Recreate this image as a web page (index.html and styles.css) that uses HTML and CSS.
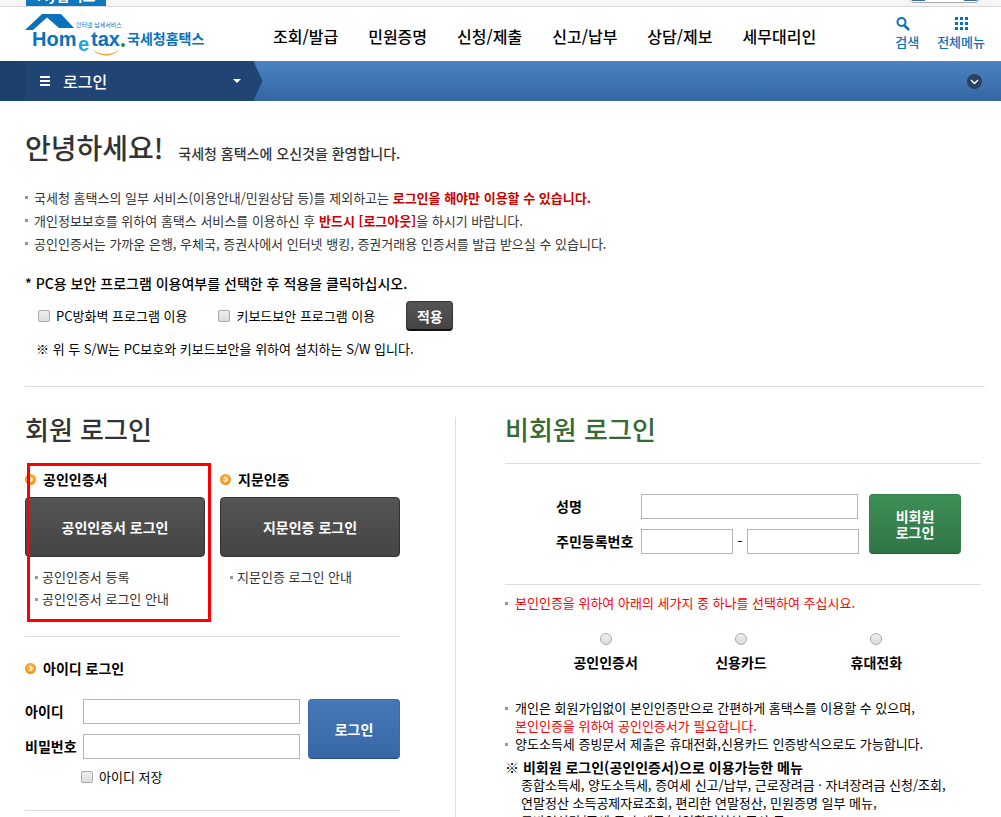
FILE: index.html
```html
<!DOCTYPE html>
<html lang="ko">
<head>
  <meta charset="UTF-8">
  <meta name="viewport" content="width=device-width, initial-scale=1.0">
  <title>국세청 홈택스 - 로그인</title>
  <link rel="stylesheet" href="styles.css">
</head>
<body>

  <!-- top strip -->
  <div class="top-bar">
    <span class="top-tab">My홈택스</span>
    <span class="top-zoom"><i></i><i></i></span>
  </div>

  <header class="header">
    <a class="logo" href="#" aria-label="Hometax 국세청홈택스">
      <svg width="182" height="44" viewBox="0 0 182 44">
        <path d="M0 17 L17 1 H36 L49 15 H34 L22 4.500 L8 17 Z" fill="#0a71bb"/>
        <text class="logo-small" x="51" y="14">인터넷 납세서비스</text>
        <text class="logo-word" x="7" y="33">Hom</text>
        <text class="logo-word logo-e" x="53" y="38">e</text>
        <text class="logo-word" x="66" y="33">tax</text>
        <circle cx="98" cy="32" r="2" fill="#0b9b4b"/>
        <path d="M66 36 Q81 46 96 36 Q81 49 66 36 Z" fill="#f9a11b"/>
        <text class="logo-name" x="102" y="31">국세청홈택스</text>
      </svg>
    </a>
    <nav class="menu">
      <a href="#">조회/발급</a>
      <a href="#">민원증명</a>
      <a href="#">신청/제출</a>
      <a href="#">신고/납부</a>
      <a href="#">상담/제보</a>
      <a href="#">세무대리인</a>
    </nav>
    <div class="tools">
      <a href="#">
        <svg width="24" height="14" viewBox="0 0 24 14"><circle cx="6.500" cy="5" r="4" fill="none" stroke="#0a71bb" stroke-width="2"/><path d="M9.500 8.500 L14 13" stroke="#0a71bb" stroke-width="2.500"/></svg>
        검색
      </a>
      <a href="#">
        <svg width="13" height="14" viewBox="0 0 13 14" fill="#0a71bb"><path d="M0 0h3v3H0zM5 0h3v3H5zM10 0h3v3h-3zM0 5h3v3H0zM5 5h3v3H5zM10 5h3v3h-3zM0 10h3v3H0zM5 10h3v3H5zM10 10h3v3h-3z"/></svg>
        전체메뉴
      </a>
    </div>
  </header>

  <!-- blue location bar -->
  <div class="location">
    <button class="location-btn" type="button">
      <span class="bars"></span>
      <span class="location-name">로그인</span>
      <span class="caret"></span>
    </button>
    <svg class="location-arrow" width="10" height="40" viewBox="0 0 10 40"><path d="M0 0 L9 20 L0 40 Z" fill="#204473"/><path d="M0 0 L9 20 L0 40" fill="none" stroke="#1a4f80"/></svg>
    <button class="location-more" type="button" aria-label="펼치기">
      <svg width="15" height="15" viewBox="0 0 15 15"><circle cx="7.500" cy="7.500" r="7.500" fill="#29425f"/><path d="M4 6 L7.500 9.500 L11 6" fill="none" stroke="#fff" stroke-width="1.500"/></svg>
    </button>
  </div>

  <main class="content">
    <section class="intro">
      <h1 class="hello">안녕하세요! <small>국세청 홈택스에 오신것을 환영합니다.</small></h1>
      <ul class="dots intro-list">
        <li>국세청 홈택스의 일부 서비스(이용안내/민원상담 등)를 제외하고는 <strong>로그인을 해야만 이용할 수 있습니다.</strong></li>
        <li>개인정보보호를 위하여 홈택스 서비스를 이용하신 후 <strong>반드시 [로그아웃]</strong>을 하시기 바랍니다.</li>
        <li>공인인증서는 가까운 은행, 우체국, 증권사에서 인터넷 뱅킹, 증권거래용 인증서를 발급 받으실 수 있습니다.</li>
      </ul>
      <p class="pc-title">* PC용 보안 프로그램 이용여부를 선택한 후 적용을 클릭하십시오.</p>
      <div class="pc-row">
        <label class="check"><input type="checkbox">PC방화벽 프로그램 이용</label>
        <label class="check"><input type="checkbox">키보드보안 프로그램 이용</label>
        <button class="btn btn-apply" type="button">적용</button>
      </div>
      <p class="pc-note">※ 위 두 S/W는 PC보호와 키보드보안을 위하여 설치하는 S/W 입니다.</p>
    </section>

    <div class="login">
      <section class="member">
        <h2>회원 로그인</h2>
        <div class="cert-row">
          <div class="cert">
            <h3><svg width="11" height="11" viewBox="0 0 11 11"><circle cx="5.500" cy="5.500" r="5.500" fill="#f5921e"/><circle cx="5.500" cy="5" r="4" fill="#fbae3c"/><path d="M4.500 3 L7 5.500 L4.500 8" fill="none" stroke="#fff" stroke-width="1.500"/></svg>공인인증서</h3>
            <button class="btn btn-dark" type="button">공인인증서 로그인</button>
            <ul class="dots">
              <li><a href="#">공인인증서 등록</a></li>
              <li><a href="#">공인인증서 로그인 안내</a></li>
            </ul>
            <div class="mark"></div>
          </div>
          <div class="cert">
            <h3><svg width="11" height="11" viewBox="0 0 11 11"><circle cx="5.500" cy="5.500" r="5.500" fill="#f5921e"/><circle cx="5.500" cy="5" r="4" fill="#fbae3c"/><path d="M4.500 3 L7 5.500 L4.500 8" fill="none" stroke="#fff" stroke-width="1.500"/></svg>지문인증</h3>
            <button class="btn btn-dark" type="button">지문인증 로그인</button>
            <ul class="dots">
              <li><a href="#">지문인증 로그인 안내</a></li>
            </ul>
          </div>
        </div>

        <form class="id-login">
          <h3><svg width="11" height="11" viewBox="0 0 11 11"><circle cx="5.500" cy="5.500" r="5.500" fill="#f5921e"/><circle cx="5.500" cy="5" r="4" fill="#fbae3c"/><path d="M4.500 3 L7 5.500 L4.500 8" fill="none" stroke="#fff" stroke-width="1.500"/></svg>아이디 로그인</h3>
          <div class="form">
            <div class="fields">
              <label for="user-id">아이디</label>
              <input class="text" id="user-id" type="text">
              <label for="user-pw">비밀번호</label>
              <input class="text" id="user-pw" type="password">
            </div>
            <button class="btn btn-side btn-blue" type="button">로그인</button>
          </div>
          <label class="check save"><input type="checkbox">아이디 저장</label>
        </form>
      </section>

      <section class="guest">
        <h2>비회원 로그인</h2>
        <form class="guest-form">
          <div class="form">
            <div class="fields">
              <label for="guest-name">성명</label>
              <input class="text" id="guest-name" type="text">
              <label for="guest-no">주민등록번호</label>
              <div class="number">
                <input class="text" id="guest-no" type="text">
                <span>-</span>
                <input class="text" type="password" aria-label="주민등록번호 뒷자리">
              </div>
            </div>
            <button class="btn btn-side btn-green" type="button">비회원<br>로그인</button>
          </div>
        </form>
        <ul class="dots red">
          <li>본인인증을 위하여 아래의 세가지 중 하나를 선택하여 주십시요.</li>
        </ul>
        <div class="radios">
          <label><input type="radio" name="auth">공인인증서</label>
          <label><input type="radio" name="auth">신용카드</label>
          <label><input type="radio" name="auth">휴대전화</label>
        </div>
        <ul class="dots guide">
          <li>개인은 회원가입없이 본인인증만으로 간편하게 홈택스를 이용할 수 있으며,<br><span class="red">본인인증을 위하여 공인인증서가 필요합니다.</span></li>
          <li>양도소득세 증빙문서 제출은 휴대전화,신용카드 인증방식으로도 가능합니다.</li>
        </ul>
        <p class="menu-title">※ 비회원 로그인(공인인증서)으로 이용가능한 메뉴</p>
        <p class="menu-list">종합소득세, 양도소득세, 증여세 신고/납부, 근로장려금 · 자녀장려금 신청/조회,<br>연말정산 소득공제자료조회, 편리한 연말정산, 민원증명 일부 메뉴,<br>모바일상담/조세 등과 세금/기업환경실천 조사 등</p>
      </section>
    </div>
  </main>
</body>
</html>
```
FILE: styles.css
```css
*{
  box-sizing: border-box;
}
body{
  margin: 0;
  font-family: "Noto Sans CJK KR", sans-serif;
  font-size: 13px;
  line-height: 18px;
  color: #000;
  background: #fff;
}
h1, h2, h3, p, ul{
  margin: 0;
  padding: 0;
}
ul{
  list-style: none;
}
a{
  color: inherit;
  text-decoration: none;
}
button, input{
  font-family: inherit;
  margin: 0;
}

/* top */
.top-bar{
  display: flex;
  justify-content: space-between;
  align-items: flex-end;
  height: 7px;
  padding: 0 21px 0 26px;
  overflow: hidden;
  background: #f5f5f5;
  border-bottom: 1px solid #d9d9d9;
}
.top-tab{
  width: 80px;
  padding-bottom: 2px;
  text-align: center;
  font-size: 14px;
  font-weight: bold;
  color: #fff;
  background: #0f78bf;
}
.top-zoom{
  display: flex;
  justify-content: space-between;
  width: 71px;
  height: 22px;
  margin-bottom: 3px;
  padding: 0 2px 1px;
  background: #fff;
  border: 1px solid #aaa;
  border-radius: 5px;
}
.top-zoom i{
  width: 13px;
  background: #3f6da8;
}
.header{
  display: flex;
  height: 54px;
  padding: 0 16px 0 25px;
}
.logo{
  width: 248px;
  padding-top: 6px;
}
.logo-small{
  font-size: 6px;
  fill: #0a71bb;
}
.logo-word{
  font-family: "Liberation Sans", sans-serif;
  font-size: 20px;
  font-weight: bold;
  fill: #0a71bb;
}
.logo-e{
  fill: #1ba7de;
}
.logo-name{
  font-size: 14px;
  font-weight: bold;
  fill: #0a71bb;
}
.menu{
  display: flex;
  flex: 1;
  gap: 30px;
  padding-top: 17px;
  font-size: 16px;
  font-weight: 500;
  line-height: 24px;
  white-space: nowrap;
}
.tools{
  display: flex;
  gap: 18px;
  padding-top: 10px;
  font-weight: 500;
  color: #0a71bb;
}
.tools a{
  display: flex;
  flex-direction: column;
  align-items: center;
  gap: 2px;
}

/* location */
.location{
  display: flex;
  height: 40px;
  padding-right: 19px;
  background: linear-gradient(#4b82c0, #3565a3);
}
.location-btn{
  display: flex;
  align-items: center;
  width: 253px;
  padding: 0 12px 0 15px;
  border: 0;
  border-left: 25px solid #1d3f6c;
  color: #fff;
  background: #204473;
}
.bars{
  width: 10px;
  height: 10px;
  border-top: 2px solid #fff;
  border-bottom: 2px solid #fff;
  background: linear-gradient(#fff, #fff) center / 10px 2px no-repeat;
}
.location-name{
  flex: 1;
  margin-left: 13px;
  text-align: left;
  font-size: 16px;
  font-weight: 500;
  line-height: 24px;
}
.caret{
  border: 4px solid transparent;
  border-top-color: #fff;
  border-bottom: 0;
}
.location-more{
  display: flex;
  align-items: center;
  margin-left: auto;
  padding: 0;
  border: 0;
  background: none;
}

.content{
  padding: 0 16px 20px 25px;
}
.intro{
  padding: 25px 0 28px;
  border-bottom: 1px solid #ddd;
}
.hello{
  font-size: 28px;
  font-weight: 500;
  line-height: 42px;
  color: #333;
}
.hello small{
  margin-left: 7px;
  font-size: 14px;
}
.dots li{
  position: relative;
  padding-left: 7px;
}
.dots li::before{
  content: "";
  position: absolute;
  left: 0;
  top: 8px;
  width: 3px;
  height: 3px;
  background: #999;
}
.intro-list{
  margin-top: 12px;
  line-height: 23px;
  color: #333;
}
.dots.intro-list li{
  padding-left: 9px;
}
.dots.intro-list li::before, .cert .dots li::before{
  top: 10px;
}
.intro-list strong{
  color: #c00;
}
.pc-title{
  margin-top: 19px;
  font-size: 14px;
  font-weight: 500;
}
.pc-row{
  display: flex;
  align-items: center;
  gap: 31px;
  margin-top: 9px;
  padding-left: 13px;
}
.check{
  display: flex;
  align-items: center;
  gap: 6px;
}
input[type="checkbox"], input[type="radio"]{
  appearance: none;
  width: 12px;
  height: 12px;
  border: 1px solid #aaa;
  border-radius: 2px;
  background: linear-gradient(#eee, #ddd);
}
input[type="radio"]{
  border-radius: 50%;
}
.btn{
  padding: 0;
  border: 1px solid #333;
  border-radius: 4px;
  font-size: 14px;
  font-weight: bold;
  line-height: 16px;
  color: #fff;
  background: linear-gradient(#555, #444);
}
.btn-apply{
  width: 47px;
  height: 30px;
  border-bottom: 2px solid #111;
}
.pc-note{
  margin-top: 9px;
  padding-left: 11px;
}

/* login columns */
.login{
  display: flex;
  padding-top: 30px;
}
.member{
  width: 431px;
  padding-right: 55px;
  border-right: 1px solid #ddd;
}
.guest{
  flex: 1;
  padding: 0 4px 0 49px;
}
h2{
  font-size: 26px;
  font-weight: 500;
  line-height: 24px;
  color: #333;
}
h3{
  display: flex;
  align-items: center;
  gap: 7px;
  font-size: 14px;
  line-height: 18px;
}
.cert-row{
  display: flex;
  gap: 15px;
  padding: 29px 0 26px;
  border-bottom: 1px solid #ddd;
}
.cert{
  position: relative;
  flex: 1;
}
.btn-dark{
  width: 100%;
  height: 60px;
  margin-top: 9px;
}
.cert .dots{
  margin: 9px 0 0 10px;
  line-height: 22px;
  color: #333;
}
/* red box around the certificate login */
.mark{
  position: absolute;
  left: 2px;
  top: -7px;
  width: 184px;
  height: 159px;
  border: 3px solid #f00;
  pointer-events: none;
}
.id-login{
  padding: 22px 0 24px;
  border-bottom: 1px solid #ddd;
}
.form{
  display: flex;
  align-items: flex-start;
}
.fields{
  display: grid;
  grid-template-columns: 58px 217px;
  row-gap: 10px;
  font-size: 14px;
  font-weight: bold;
  line-height: 24px;
}
.text{
  width: 100%;
  height: 25px;
  border: 1px solid #b5b5b5;
  background: #fff;
}
.id-login .form{
  margin-top: 22px;
}
.btn-side{
  width: 92px;
  height: 60px;
  margin-left: auto;
}
.btn-blue{
  border-color: #3c6ba8 #3c6ba8 #264a7a;
  background: linear-gradient(#4678b8, #3867a5);
}
.btn-green{
  border-color: #37804c #37804c #235c35;
  background: linear-gradient(#3e8f57, #317546);
}
.save{
  margin: 9px 0 0 56px;
}

/* guest */
.guest h2{
  color: #366a35;
}
.guest-form{
  margin-top: 22px;
  padding: 30px 20px 30px 51px;
  border: 1px solid #ddd;
  border-width: 1px 0;
}
.guest-form .fields{
  grid-template-columns: 85px 217px;
}
.number{
  display: grid;
  grid-template-columns: 92px 14px 112px;
  font-weight: normal;
  text-align: center;
}
.guest .dots li{
  padding-left: 10px;
}
.red{
  color: #f00;
}
.dots.red{
  margin-top: 9px;
}
.radios{
  display: flex;
  margin-top: 21px;
  padding: 0 37px 0 33px;
}
.radios label{
  display: flex;
  flex: 1;
  flex-direction: column;
  align-items: center;
  gap: 8px;
  font-size: 14px;
  font-weight: bold;
}
.guide{
  margin-top: 28px;
}
.menu-title{
  margin-top: 5px;
  font-size: 14px;
  font-weight: bold;
}
.menu-list{
  padding-left: 16px;
  white-space: nowrap;
}
```
